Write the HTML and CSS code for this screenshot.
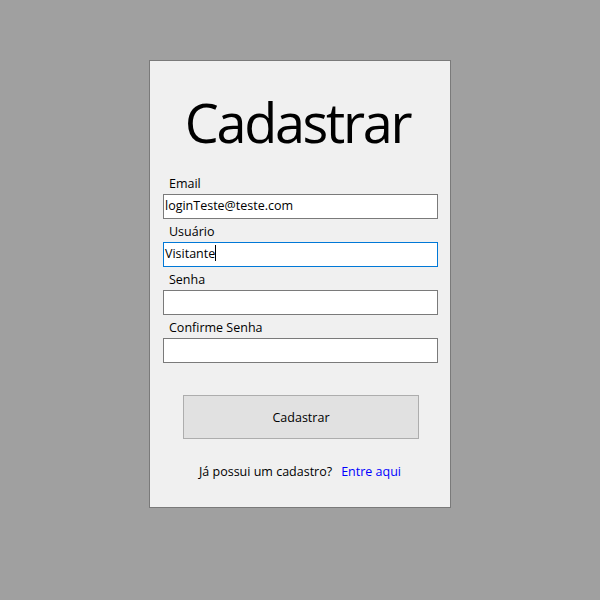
FILE: index.html
```html
<!DOCTYPE html>
<html lang="pt-BR">
<head>
<meta charset="utf-8">
<title>Cadastrar</title>
<link rel="stylesheet" href="styles.css">
</head>
<body>
<div class="window">
  <div class="panel">
    <h1 class="title">Cadastrar</h1>
    <div class="fields">
      <label class="label">Email</label>
      <div class="textbox">loginTeste@teste.com</div>
      <label class="label">Usuário</label>
      <div class="textbox focused">Visitante<span class="caret"></span></div>
      <label class="label">Senha</label>
      <div class="textbox"></div>
      <label class="label">Confirme Senha</label>
      <div class="textbox"></div>
    </div>
    <button class="button" type="button">Cadastrar</button>
    <p class="footer">Já possui um cadastro?<a class="link" href="#">Entre aqui</a></p>
  </div>
</div>
</body>
</html>
```
FILE: styles.css
```css
html, body {
  margin: 0;
  padding: 0;
}
body {
  background: #a0a0a0;
  width: 600px;
  height: 600px;
  font-family: "Open Sans", "Noto Sans", sans-serif;
  color: #000;
}
.window {
  padding: 60px 0 0 149px;
}
.panel {
  box-sizing: border-box;
  width: 302px;
  height: 448px;
  background: #f0f0f0;
  border: 1px solid #7a7a7a;
  display: flex;
  flex-direction: column;
}
.title {
  margin: 0;
  height: 110px;
  font-weight: 400;
  font-size: 54px;
  letter-spacing: -2.3px;
  line-height: 1;
  text-align: center;
  padding: 34px 5px 0 0;
  box-sizing: border-box;
}
.fields {
  display: flex;
  flex-direction: column;
  padding: 0 12px 0 13px;
}
.label {
  display: block;
  height: 23px;
  padding-left: 6px;
  font-size: 12.5px;
  line-height: 25px;
  box-sizing: border-box;
}
.textbox {
  box-sizing: border-box;
  height: 25px;
  border: 1px solid #7a7a7a;
  background: #fff;
  font-size: 12.5px;
  line-height: 22px;
  padding: 0 1px;
  white-space: nowrap;
}
.textbox.focused {
  border-color: #0078d7;
}
.caret {
  display: inline-block;
  width: 1px;
  height: 16px;
  background: #000;
  vertical-align: -3px;
}
.button {
  margin: 32px 0 0 33px;
  width: 236px;
  height: 44px;
  background: #e1e1e1;
  border: 1px solid #adadad;
  font-family: inherit;
  font-size: 12.5px;
  color: #000;
  padding: 0;
}
.footer {
  margin: 25px 0 0;
  text-align: center;
  font-size: 12.5px;
  line-height: 16px;
}
.link {
  color: #0000ff;
  text-decoration: none;
  margin-left: 9px;
}
```
